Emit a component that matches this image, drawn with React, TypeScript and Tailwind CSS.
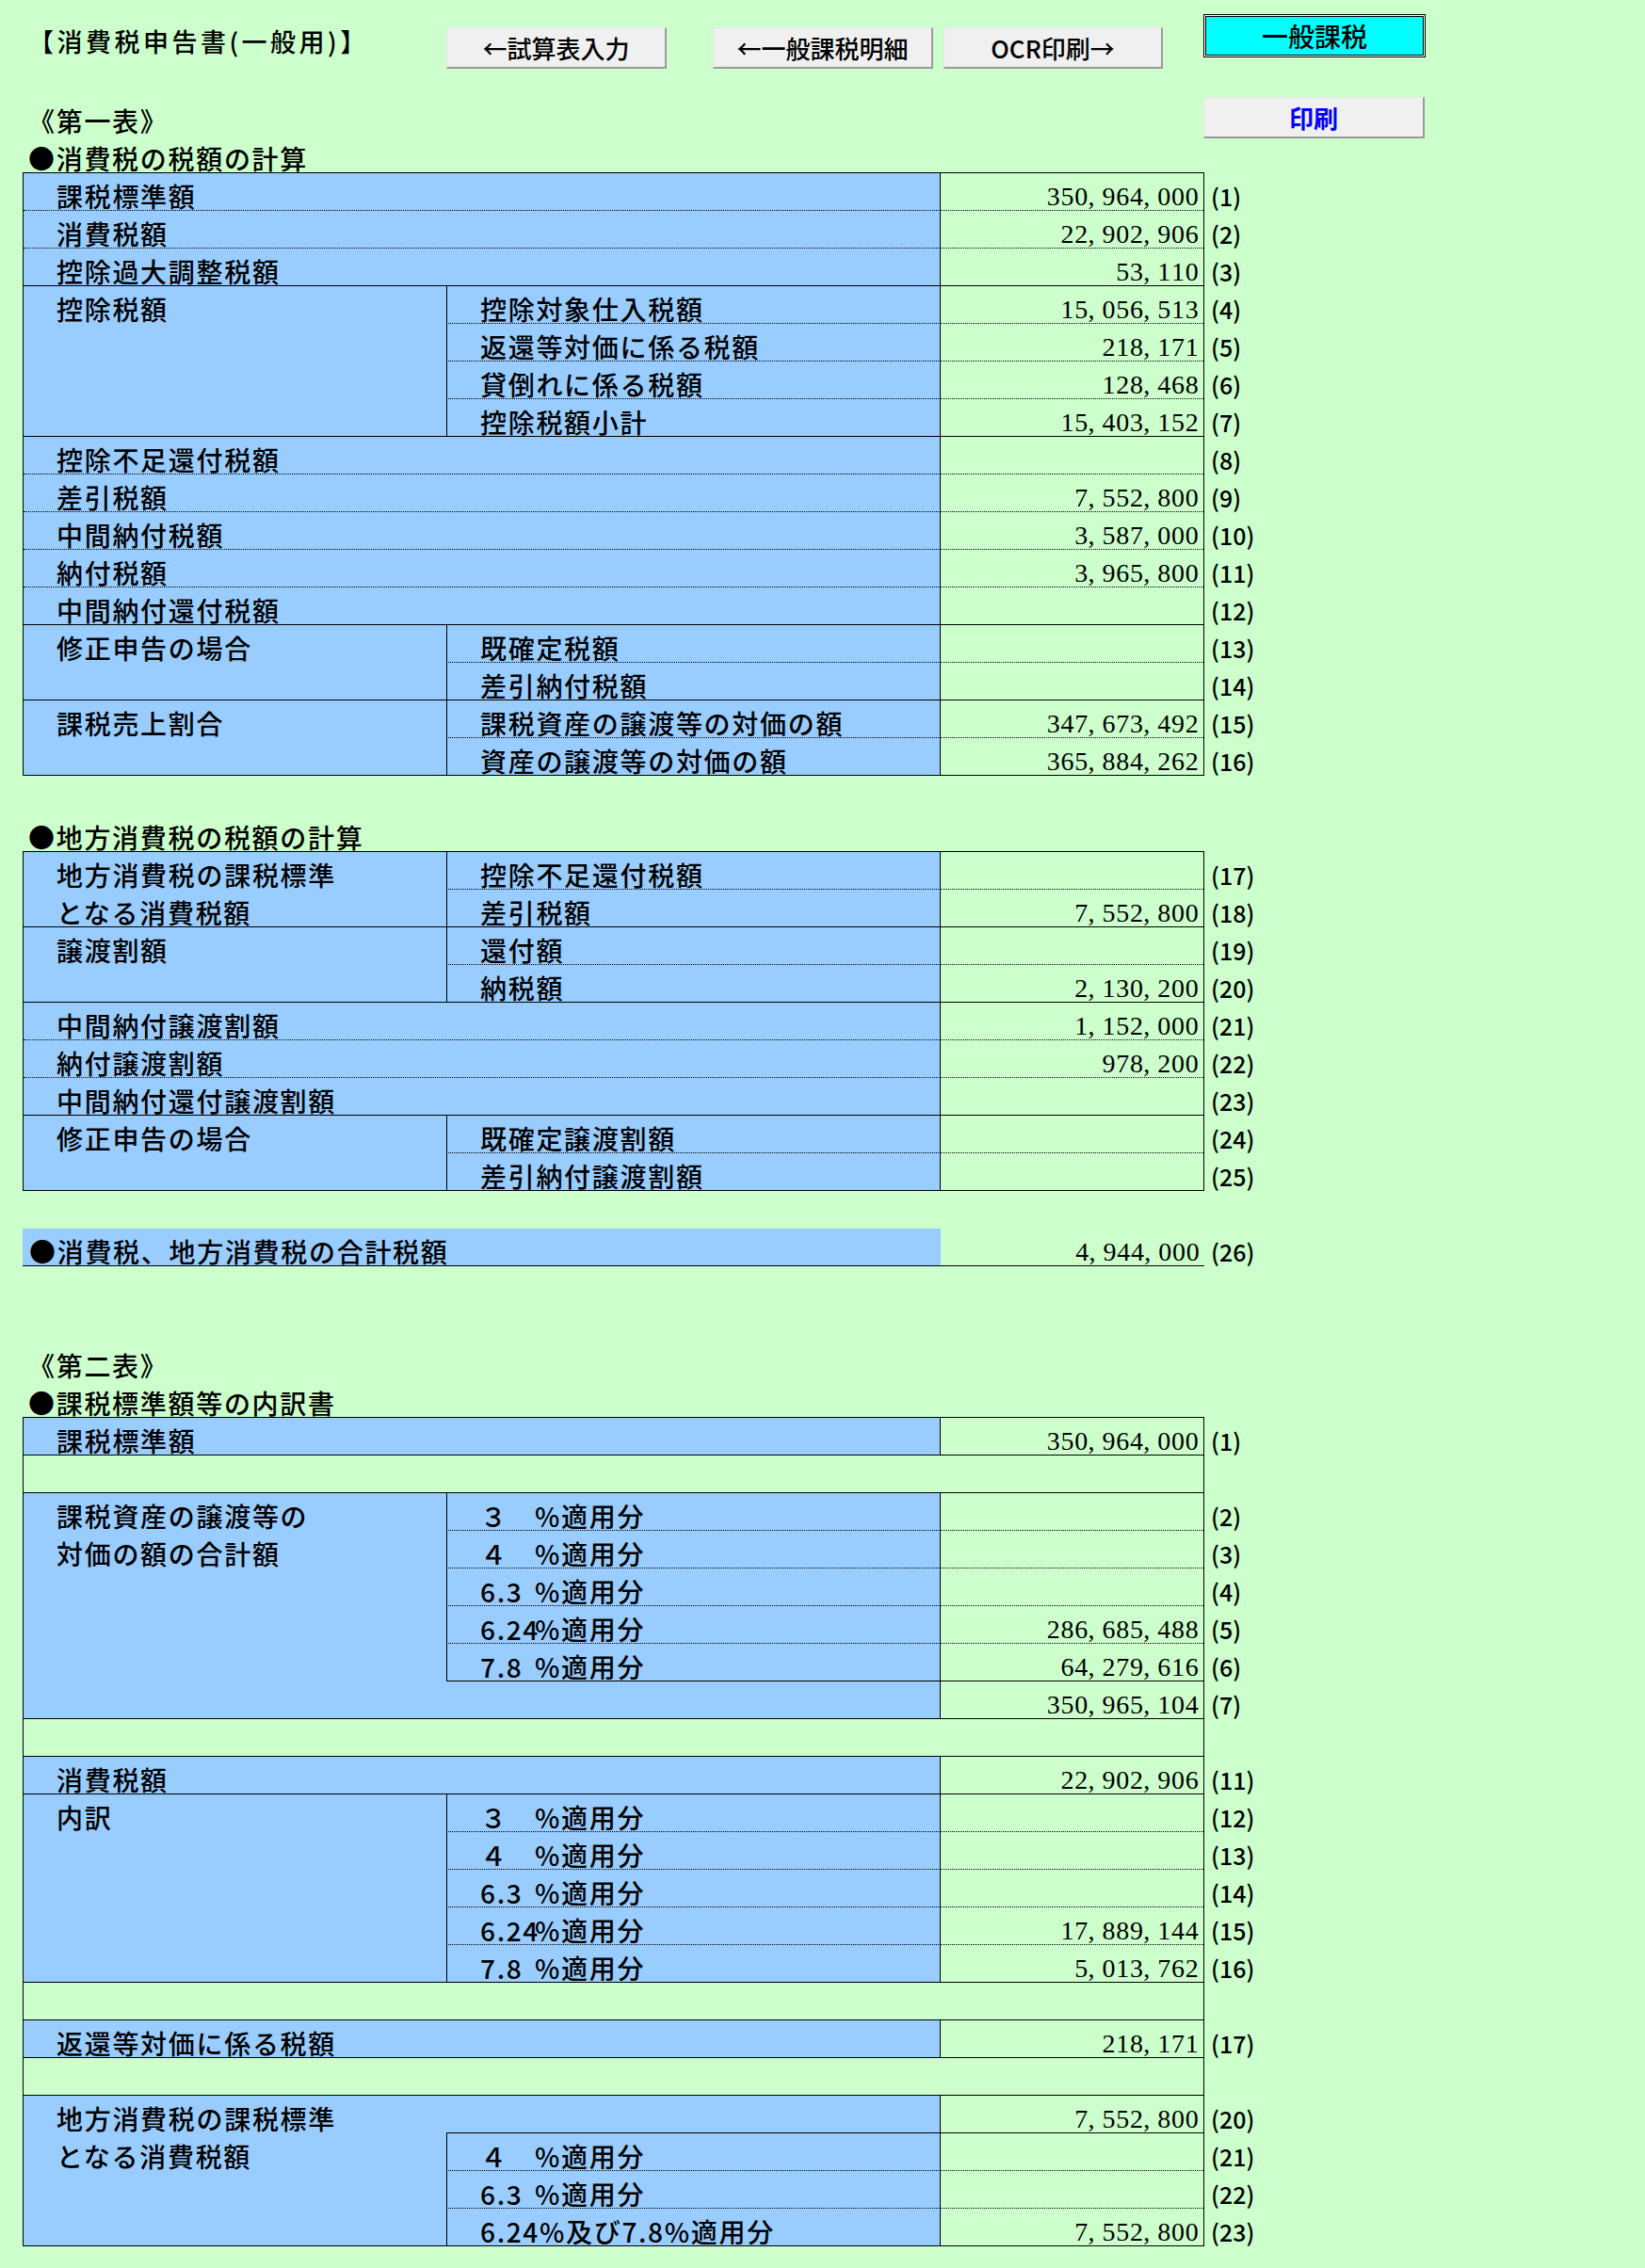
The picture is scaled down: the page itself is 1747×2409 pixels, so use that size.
import React from 'react';

type Line = 'dotted' | 'solid';
type Sub = { label?: string; val?: string; n: string; line: Line; noDiv?: boolean; pct?: [string, string] };
type Row =
  | { k: 'w'; label: string; val?: string; n: string; line: Line }
  | { k: 'g'; label: string[]; subs: Sub[] }
  | { k: 'blank' };

const SPAN: Record<number, string> = {
  1: 'row-span-1',
  2: 'row-span-2',
  4: 'row-span-4',
  5: 'row-span-5',
  6: 'row-span-6',
};

const LBL = "text-[28px] leading-[28px] tracking-[1.7px] font-medium whitespace-nowrap";

function Num({ v }: { v?: string }) {
  if (!v) return null;
  return (
    <span className="inline-flex font-['Liberation_Serif',serif] text-[28px] leading-[28px]">
      {v.split('').map((c, i) => (
        <span key={i} className={c === ',' ? 'inline-block w-[14.7px] text-left' : 'inline-block w-[14.7px] text-center'}>
          {c}
        </span>
      ))}
    </span>
  );
}

function lineCls(l: Line) {
  return l === 'dotted' ? 'border-b border-black [border-bottom-style:dotted]' : 'border-b border-black';
}

function PctLabel({ p }: { p: [string, string] }) {
  return (
    <span className={LBL + ' inline-flex'}>
      <span className="inline-block w-[58px]">{p[0]}</span>
      <span>{p[1]}</span>
    </span>
  );
}

function Table({ rows, nrows }: { rows: Row[]; nrows: number }) {
  const cells: React.ReactNode[] = [];
  const nums: string[] = [];
  rows.forEach((r, i) => {
    if (r.k === 'blank') {
      cells.push(<div key={'b' + i} className="col-span-3 bg-[#CCFFCC] border-b border-black" />);
      nums.push('');
    } else if (r.k === 'w') {
      cells.push(
        <div key={'wl' + i} className={'col-span-2 bg-[#99CCFF] border-r border-r-black flex items-end pl-[35px] pb-[1px] ' + lineCls(r.line)}>
          <span className={LBL}>{r.label}</span>
        </div>
      );
      cells.push(
        <div key={'wv' + i} className={'bg-[#CCFFCC] flex items-end justify-end pr-[5px] ' + lineCls(r.line)}>
          <Num v={r.val} />
        </div>
      );
      nums.push(r.n);
    } else {
      cells.push(
        <div key={'gl' + i} className={SPAN[r.subs.length] + ' bg-[#99CCFF] border-b border-black flex flex-col pl-[35px]'}>
          {r.label.map((t, j) => (
            <div key={j} className={j === 0 ? 'h-[39px] flex items-end pb-[1px]' : 'h-[40px] flex items-end pb-[1px]'}>
              <span className={LBL}>{t}</span>
            </div>
          ))}
        </div>
      );
      r.subs.forEach((s, j) => {
        cells.push(
          <div
            key={'sl' + i + '-' + j}
            className={
              (s.noDiv ? '' : 'border-l border-l-black ') +
              'bg-[#99CCFF] border-r border-r-black flex items-end pl-[35px] pb-[1px] ' +
              lineCls(s.line)
            }
          >
            {s.pct ? <PctLabel p={s.pct} /> : <span className={LBL}>{s.label}</span>}
          </div>
        );
        cells.push(
          <div key={'sv' + i + '-' + j} className={'bg-[#CCFFCC] flex items-end justify-end pr-[5px] ' + lineCls(s.line)}>
            <Num v={s.val} />
          </div>
        );
        nums.push(s.n);
      });
    }
  });
  return (
    <div className="flex">
      <div
        className="grid w-[1255px] grid-cols-[449px_525px_279px] border-t border-l border-r border-black"
        style={{ gridTemplateRows: `repeat(${nrows}, 40px)` }}
      >
        {cells}
      </div>
      <div className="flex flex-col pt-[1px] pl-[7px]">
        {nums.map((n, i) => (
          <div key={i} className="h-[40px] flex items-end pb-[3px]">
            <span className="text-[25px] leading-[25px] font-medium">{n}</span>
          </div>
        ))}
      </div>
    </div>
  );
}

function Btn({ children, cls }: { children: React.ReactNode; cls: string }) {
  return (
    <div
      className={
        'h-[44px] bg-[#F0F0F0] border-t border-l border-t-[#e6e6e6] border-l-[#e6e6e6] border-r-2 border-b-2 border-r-[#9a9a9a] border-b-[#9a9a9a] flex items-center justify-center text-[26px] leading-[26px] font-medium ' +
        cls
      }
    >
      {children}
    </div>
  );
}

const t1: Row[] = [
  { k: 'w', label: '課税標準額', val: '350,964,000', n: '(1)', line: 'dotted' },
  { k: 'w', label: '消費税額', val: '22,902,906', n: '(2)', line: 'dotted' },
  { k: 'w', label: '控除過大調整税額', val: '53,110', n: '(3)', line: 'solid' },
  {
    k: 'g',
    label: ['控除税額'],
    subs: [
      { label: '控除対象仕入税額', val: '15,056,513', n: '(4)', line: 'dotted' },
      { label: '返還等対価に係る税額', val: '218,171', n: '(5)', line: 'dotted' },
      { label: '貸倒れに係る税額', val: '128,468', n: '(6)', line: 'dotted' },
      { label: '控除税額小計', val: '15,403,152', n: '(7)', line: 'solid' },
    ],
  },
  { k: 'w', label: '控除不足還付税額', n: '(8)', line: 'dotted' },
  { k: 'w', label: '差引税額', val: '7,552,800', n: '(9)', line: 'dotted' },
  { k: 'w', label: '中間納付税額', val: '3,587,000', n: '(10)', line: 'dotted' },
  { k: 'w', label: '納付税額', val: '3,965,800', n: '(11)', line: 'dotted' },
  { k: 'w', label: '中間納付還付税額', n: '(12)', line: 'solid' },
  {
    k: 'g',
    label: ['修正申告の場合'],
    subs: [
      { label: '既確定税額', n: '(13)', line: 'dotted' },
      { label: '差引納付税額', n: '(14)', line: 'solid' },
    ],
  },
  {
    k: 'g',
    label: ['課税売上割合'],
    subs: [
      { label: '課税資産の譲渡等の対価の額', val: '347,673,492', n: '(15)', line: 'dotted' },
      { label: '資産の譲渡等の対価の額', val: '365,884,262', n: '(16)', line: 'solid' },
    ],
  },
];

const t2: Row[] = [
  {
    k: 'g',
    label: ['地方消費税の課税標準', 'となる消費税額'],
    subs: [
      { label: '控除不足還付税額', n: '(17)', line: 'dotted' },
      { label: '差引税額', val: '7,552,800', n: '(18)', line: 'solid' },
    ],
  },
  {
    k: 'g',
    label: ['譲渡割額'],
    subs: [
      { label: '還付額', n: '(19)', line: 'dotted' },
      { label: '納税額', val: '2,130,200', n: '(20)', line: 'solid' },
    ],
  },
  { k: 'w', label: '中間納付譲渡割額', val: '1,152,000', n: '(21)', line: 'dotted' },
  { k: 'w', label: '納付譲渡割額', val: '978,200', n: '(22)', line: 'dotted' },
  { k: 'w', label: '中間納付還付譲渡割額', n: '(23)', line: 'solid' },
  {
    k: 'g',
    label: ['修正申告の場合'],
    subs: [
      { label: '既確定譲渡割額', n: '(24)', line: 'dotted' },
      { label: '差引納付譲渡割額', n: '(25)', line: 'solid' },
    ],
  },
];

const t3: Row[] = [
  { k: 'w', label: '課税標準額', val: '350,964,000', n: '(1)', line: 'solid' },
  { k: 'blank' },
  {
    k: 'g',
    label: ['課税資産の譲渡等の', '対価の額の合計額'],
    subs: [
      { pct: ['３', '%適用分'], n: '(2)', line: 'dotted' },
      { pct: ['４', '%適用分'], n: '(3)', line: 'dotted' },
      { pct: ['6.3', '%適用分'], n: '(4)', line: 'dotted' },
      { pct: ['6.24', '%適用分'], val: '286,685,488', n: '(5)', line: 'dotted' },
      { pct: ['7.8', '%適用分'], val: '64,279,616', n: '(6)', line: 'solid' },
      { label: '', val: '350,965,104', n: '(7)', line: 'solid', noDiv: true },
    ],
  },
  { k: 'blank' },
  { k: 'w', label: '消費税額', val: '22,902,906', n: '(11)', line: 'solid' },
  {
    k: 'g',
    label: ['内訳'],
    subs: [
      { pct: ['３', '%適用分'], n: '(12)', line: 'dotted' },
      { pct: ['４', '%適用分'], n: '(13)', line: 'dotted' },
      { pct: ['6.3', '%適用分'], n: '(14)', line: 'dotted' },
      { pct: ['6.24', '%適用分'], val: '17,889,144', n: '(15)', line: 'dotted' },
      { pct: ['7.8', '%適用分'], val: '5,013,762', n: '(16)', line: 'solid' },
    ],
  },
  { k: 'blank' },
  { k: 'w', label: '返還等対価に係る税額', val: '218,171', n: '(17)', line: 'solid' },
  { k: 'blank' },
  {
    k: 'g',
    label: ['地方消費税の課税標準', 'となる消費税額'],
    subs: [
      { label: '', val: '7,552,800', n: '(20)', line: 'solid', noDiv: true },
      { pct: ['４', '%適用分'], n: '(21)', line: 'dotted' },
      { pct: ['6.3', '%適用分'], n: '(22)', line: 'dotted' },
      { label: '6.24%及び7.8%適用分', val: '7,552,800', n: '(23)', line: 'solid' },
    ],
  },
];

function RowText({ children, cls = '' }: { children: React.ReactNode; cls?: string }) {
  return (
    <div className={'h-[40px] flex items-end pb-[1px] ' + cls}>
      <span className={LBL}>{children}</span>
    </div>
  );
}

export default function App() {
  return (
    <div className="min-h-[2409px] w-full bg-[#CCFFCC] text-black font-['Noto_Sans_CJK_JP','Noto_Sans_CJK_SC',sans-serif]">
      <div className="pl-[24px]">
        {/* header row */}
        <div className="flex h-[103px] items-start">
          <div className="w-[450px] pt-[30px] pl-[6px]">
            <span className="text-[27px] leading-[27px] tracking-[3.5px] font-medium whitespace-nowrap">【消費税申告書(一般用)】</span>
          </div>
          <Btn cls="mt-[29px] w-[234px]">←試算表入力</Btn>
          <Btn cls="mt-[29px] ml-[49px] w-[234px]">←一般課税明細</Btn>
          <Btn cls="mt-[29px] ml-[11px] w-[233px]">OCR印刷→</Btn>
          <div className="mt-[15px] ml-[43px] w-[236px] h-[46px] border border-black bg-white p-[1px]">
            <div className="h-full w-full border border-black bg-[#00FFFF] flex items-center justify-center text-[28px] leading-[28px] font-medium">
              一般課税
            </div>
          </div>
        </div>
        <div className="flex h-[80px] items-start">
          <div className="w-[1254px] flex flex-col pl-[6px]">
            <RowText>《第一表》</RowText>
            <RowText>●消費税の税額の計算</RowText>
          </div>
          <Btn cls="w-[235px] text-[#0000FF] !font-bold">印刷</Btn>
        </div>

        <Table rows={t1} nrows={16} />

        <div className="h-[40px]" />
        <div className="pl-[6px]">
          <RowText>●地方消費税の税額の計算</RowText>
        </div>
        <Table rows={t2} nrows={9} />

        <div className="h-[40px]" />
        <div className="flex">
          <div className="flex h-[40px] w-[1255px] border-b border-black">
            <div className="w-[975px] bg-[#99CCFF] flex items-end pl-[7px] pb-[1px]">
              <span className={LBL}>●消費税、地方消費税の合計税額</span>
            </div>
            <div className="flex-1 flex items-end justify-end pr-[5px]">
              <Num v="4,944,000" />
            </div>
          </div>
          <div className="h-[40px] flex items-end pb-[3px] pl-[7px]">
            <span className="text-[25px] leading-[25px] font-medium">(26)</span>
          </div>
        </div>

        <div className="h-[80px]" />
        <div className="pl-[6px]">
          <RowText>《第二表》</RowText>
          <RowText>●課税標準額等の内訳書</RowText>
        </div>
        <Table rows={t3} nrows={22} />
      </div>
    </div>
  );
}
